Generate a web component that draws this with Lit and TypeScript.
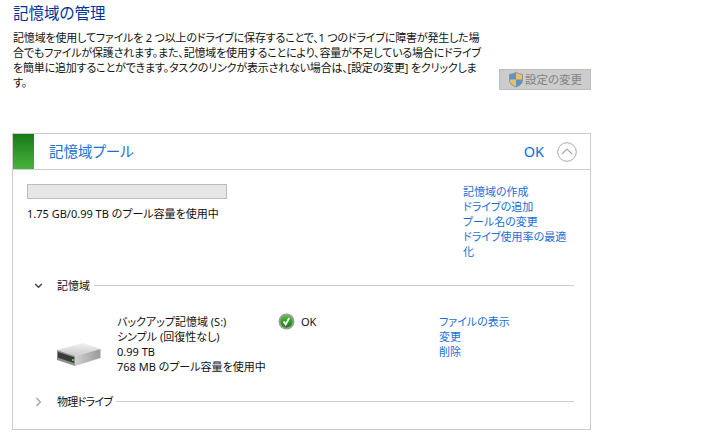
import {css, html, LitElement} from 'lit'
import {customElement} from 'lit/decorators.js'

@customElement('app-root')
export class AppRoot extends LitElement {
  static styles = css`
    :host {
      background: #fff;
      color: #111;
      display: block;
      font-family: "Noto Sans", "Noto Sans CJK JP", sans-serif;
      font-feature-settings: "palt";
      font-size: 11px;
      height: 447px;
      line-height: 15px;
      overflow: hidden;
      width: 718px;
    }

    .page {
      padding: 3px 127px 0 12px;
    }

    h1 {
      color: #003399;
      font-size: 15.5px;
      font-weight: 400;
      line-height: 21px;
      margin: 0 0 6px 1px;
    }

    .intro {
      display: flex;
      height: 103px;
      justify-content: space-between;
    }

    .intro p {
      letter-spacing: -0.18px;
      margin: 0 0 0 1px;
      white-space: nowrap;
    }

    .elevate {
      align-items: center;
      background: #cccccc;
      border: 1px solid #bdbdbd;
      box-sizing: border-box;
      color: #838383;
      display: flex;
      flex: none;
      font-size: 11.5px;
      gap: 1px;
      height: 21px;
      margin-top: 39px;
      padding-left: 8px;
      white-space: nowrap;
      width: 92px;
    }

    .card {
      border: 1px solid #cccccc;
      box-sizing: border-box;
      height: 297px;
    }

    .card-head {
      align-items: center;
      border-bottom: 1px solid #cccccc;
      display: flex;
      height: 35px;
    }

    .stripe {
      align-self: stretch;
      background: linear-gradient(#187a18, #47b33f);
      width: 21px;
    }

    .card-title {
      color: #1a6fd6;
      flex: 1;
      font-size: 14.5px;
      margin-left: 15px;
    }

    .card-ok {
      color: #0f6cd0;
      font-size: 14.5px;
      margin-right: 13px;
    }

    .toggle {
      display: block;
      margin-right: 13px;
    }

    .pool {
      box-sizing: border-box;
      display: flex;
      height: 108px;
      justify-content: space-between;
      padding: 14px 0 0 14px;
    }

    .bar {
      background: #e6e6e6;
      border: 1px solid #bcbcbc;
      box-sizing: border-box;
      height: 15px;
      margin-bottom: 7px;
      width: 200px;
    }

    .links {
      color: #1a6fd6;
      display: flex;
      flex-direction: column;
    }

    .pool .links {
      margin-right: 21px;
      width: 106px;
    }

    .section {
      align-items: center;
      display: flex;
      height: 15px;
      padding: 0 16px 0 21px;
    }

    .section svg {
      display: block;
      flex: none;
      margin-right: 14px;
      width: 9px;
    }

    .section span {
      margin-right: 4px;
    }

    .section .narrow {
      letter-spacing: -0.7px;
    }

    .section i {
      background: #cccccc;
      flex: 1;
      height: 1px;
    }

    .space {
      box-sizing: border-box;
      display: grid;
      grid-template-columns: 60px 161px 161px 1fr;
      height: 101px;
      padding: 21px 0 0 44px;
    }

    .drive {
      display: block;
      margin-top: 29px;
    }

    .status {
      align-items: flex-start;
      display: flex;
      gap: 6px;
    }

    .status svg {
      display: block;
      margin-top: -1px;
    }
  `

  render() {
    return html`
      <div class="page">
        <h1>記憶域の管理</h1>
        <div class="intro">
          <p>
            記憶域を使用してファイルを 2 つ以上のドライブに保存することで、1 つのドライブに障害が発生した場<br>
            合でもファイルが保護されます。また、記憶域を使用することにより、容量が不足している場合にドライブ<br>
            を簡単に追加することができます。タスクのリンクが表示されない場合は、[設定の変更] をクリックしま<br>
            す。
          </p>
          <div class="elevate">
            <svg width="16" height="17" viewBox="0 0 16 17">
              <path d="M8 1C6 2.6 4 3.2 1.500 3.200V9c0 3.400 2.800 5.800 6.500 7 3.700-1.200 6.500-3.600 6.500-7V3.200C12 3.200 10 2.600 8 1z" fill="#5f93c8" stroke="#8d8d8d" stroke-width=".8"/>
              <path d="M8 1.500c2 1.400 3.900 2.100 6 2.100v4.900H8z" fill="#e8c06a"/>
              <path d="M2 8.500h6v7C4.600 14.300 2 12.200 2 9z" fill="#e8c06a"/>
            </svg>
            <span>設定の変更</span>
          </div>
        </div>
        <div class="card">
          <div class="card-head">
            <div class="stripe"></div>
            <div class="card-title">記憶域プール</div>
            <div class="card-ok">OK</div>
            <svg class="toggle" width="20" height="20" viewBox="0 0 20 20" fill="none">
              <circle cx="10" cy="10" r="9.300" stroke="#a9a9a9"/>
              <path d="M5 12l5-5 5 5" stroke="#a9a9a9" stroke-width="1.200"/>
            </svg>
          </div>
          <div class="pool">
            <div>
              <div class="bar"></div>
              <div>1.75 GB/0.99 TB のプール容量を使用中</div>
            </div>
            <div class="links">
              <span>記憶域の作成</span>
              <span>ドライブの追加</span>
              <span>プール名の変更</span>
              <span>ドライブ使用率の最適化</span>
            </div>
          </div>
          <div class="section">
            <svg width="9" height="6" viewBox="0 0 8 6" fill="none">
              <path d="M.7 1l3.300 3.300L7.300 1" stroke="#444" stroke-width="1.500"/>
            </svg>
            <span>記憶域</span>
            <i></i>
          </div>
          <div class="space">
            <svg class="drive" width="44" height="24" viewBox="0 0 44 24">
              <defs>
                <linearGradient id="top" x1="0" y1="0" x2="0" y2="1">
                  <stop offset="0" stop-color="#f1f1f1"/>
                  <stop offset="1" stop-color="#c9c9c9"/>
                </linearGradient>
                <linearGradient id="side" x1="0" y1="0" x2="1" y2="0">
                  <stop offset="0" stop-color="#d0d0d0"/>
                  <stop offset="1" stop-color="#9a9a9a"/>
                </linearGradient>
              </defs>
              <path d="M0 7 26 0l17.500 6L18 13z" fill="url(#top)"/>
              <path d="M18 13 43.500 6v9L18 23z" fill="url(#side)"/>
              <path d="M0 7l18 6v10L0 17z" fill="#8f8f8f"/>
              <path d="M1 9l16 5.300v5.700L1 14.700z" fill="#3a3a3a"/>
              <rect x="15" y="16" width="2.500" height="2" fill="#3fd14a"/>
            </svg>
            <div>
              <div>バックアップ記憶域 (S:)</div>
              <div>シンプル (回復性なし)</div>
              <div>0.99 TB</div>
              <div>768 MB のプール容量を使用中</div>
            </div>
            <div class="status">
              <svg width="17" height="17" viewBox="0 0 17 17">
                <defs>
                  <linearGradient id="ok" x1="0" y1="0" x2="0" y2="1">
                    <stop offset="0" stop-color="#52c23c"/>
                    <stop offset="1" stop-color="#0d7a10"/>
                  </linearGradient>
                </defs>
                <circle cx="8.500" cy="8.500" r="8" fill="#9b9b9b"/>
                <circle cx="8.500" cy="8.500" r="6" fill="url(#ok)"/>
                <path d="M5.500 8.500l2.200 3 3.500-6.500" fill="none" stroke="#fff" stroke-width="1.800"/>
              </svg>
              <span>OK</span>
            </div>
            <div class="links">
              <span>ファイルの表示</span>
              <span>変更</span>
              <span>削除</span>
            </div>
          </div>
          <div class="section">
            <svg width="9" height="10" viewBox="0 0 8 10" fill="none">
              <path d="M2 1l3.800 4L2 9" stroke="#a9a9a9" stroke-width="1.500"/>
            </svg>
            <span class="narrow">物理ドライブ</span>
            <i></i>
          </div>
        </div>
      </div>`
  }
}
